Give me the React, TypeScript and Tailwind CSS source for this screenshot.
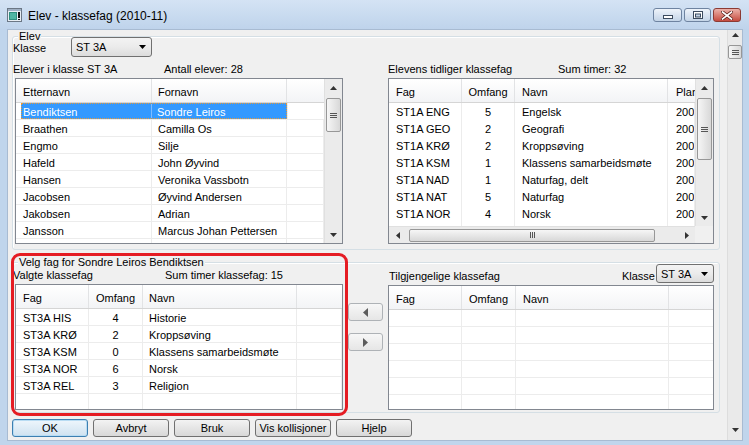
import React from 'react';

type Dir = 'up' | 'down' | 'left' | 'right';

function Tri({ dir, className = '', big = false }: { dir: Dir; className?: string; big?: boolean }) {
  const vert = dir === 'up' || dir === 'down';
  const w = big ? (vert ? 9 : 5) : vert ? 7 : 4;
  const h = big ? (vert ? 5 : 9) : vert ? 4 : 7;
  const pts =
    dir === 'up'
      ? `0,${h} ${w / 2},0 ${w},${h}`
      : dir === 'down'
      ? `0,0 ${w},0 ${w / 2},${h}`
      : dir === 'left'
      ? `${w},0 ${w},${h} 0,${h / 2}`
      : `0,0 0,${h} ${w},${h / 2}`;
  return (
    <svg width={w} height={h} viewBox={`0 0 ${w} ${h}`} className={className}>
      <polygon points={pts} fill="currentColor" />
    </svg>
  );
}

function AppIcon() {
  return (
    <svg width="15" height="14" viewBox="0 0 15 14">
      <rect x="0.5" y="0.5" width="14" height="13" fill="#e8eef4" stroke="#6b7785" />
      <rect x="1" y="1" width="13" height="2" fill="#9fb0c4" />
      <rect x="2" y="4" width="8" height="8" fill="#2f8f7f" />
      <rect x="3" y="5" width="6" height="6" fill="#4fb6a3" />
      <rect x="11" y="4" width="2" height="6" fill="#111" />
      <rect x="11" y="11" width="2" height="1" fill="#111" />
    </svg>
  );
}

function CaptionButtons() {
  return (
    <div className="ml-auto mt-[8px] mr-[8px] flex gap-[2px]">
      <div className="w-[29px] h-[14px] rounded-[3px] border border-[#6e83a0] bg-gradient-to-b from-[#eef3fa] to-[#c4d4e7] flex items-end justify-center pb-[2px]">
        <svg width="10" height="4" viewBox="0 0 10 4">
          <rect x="0.5" y="0.5" width="9" height="3" fill="#fff" stroke="#3b4a5e" />
        </svg>
      </div>
      <div className="w-[27px] h-[14px] rounded-[3px] border border-[#6e83a0] bg-gradient-to-b from-[#eef3fa] to-[#c4d4e7] flex items-center justify-center">
        <svg width="10" height="8" viewBox="0 0 10 8">
          <rect x="0.5" y="0.5" width="9" height="7" fill="#fff" stroke="#3b4a5e" />
          <rect x="2.5" y="3" width="5" height="3" fill="#c4d4e7" stroke="#3b4a5e" />
        </svg>
      </div>
      <div className="w-[28px] h-[14px] rounded-[3px] border border-[#8c3a33] bg-gradient-to-b from-[#eab1aa] to-[#c54a40] flex items-center justify-center">
        <svg width="12" height="9" viewBox="0 0 12 9">
          <path d="M1.5 1 L10.5 8 M10.5 1 L1.5 8" stroke="#5a1f1a" strokeWidth="3.2" strokeLinecap="square" />
          <path d="M1.5 1 L10.5 8 M10.5 1 L1.5 8" stroke="#ffffff" strokeWidth="1.6" strokeLinecap="square" />
        </svg>
      </div>
    </div>
  );
}

type Col = { w: string; cls?: string };

function Header({ cols, labels }: { cols: Col[]; labels: string[] }) {
  return (
    <div className="flex h-[24px] shrink-0 border-b border-[#d5d5d5] bg-gradient-to-b from-white to-[#f3f4f6]">
      {cols.map((c, i) => (
        <div
          key={i}
          className={`${c.w} ${c.cls ?? ''} shrink-0 flex items-center pt-[3px] overflow-hidden whitespace-nowrap ${
            i < cols.length - 1 ? 'border-r border-[#e2e3e5]' : ''
          }`}
        >
          {labels[i]}
        </div>
      ))}
    </div>
  );
}

function Row({ cols, cells, hLine, vLine }: { cols: Col[]; cells: string[]; hLine: boolean; vLine: boolean }) {
  return (
    <div className={`flex h-[17px] shrink-0 ${hLine ? 'border-b border-[#ececec]' : ''}`}>
      {cols.map((c, i) => (
        <div
          key={i}
          className={`${c.w} ${c.cls ?? ''} shrink-0 flex items-center pt-[2px] overflow-hidden whitespace-nowrap ${
            vLine ? 'border-r border-[#ececec]' : ''
          }`}
        >
          {cells[i] ?? ''}
        </div>
      ))}
    </div>
  );
}

function Thumb({ className, horizontal = false }: { className: string; horizontal?: boolean }) {
  return (
    <div
      className={`${className} rounded-[2px] border border-[#979797] ${
        horizontal ? 'bg-gradient-to-b' : 'bg-gradient-to-r'
      } from-[#f6f6f6] to-[#d8d8d8] flex items-center justify-center shrink-0`}
    >
      {horizontal ? (
        <div className="flex gap-[1px]">
          <div className="w-[1px] h-[6px] bg-[#555]" />
          <div className="w-[1px] h-[6px] bg-[#555]" />
          <div className="w-[1px] h-[6px] bg-[#555]" />
        </div>
      ) : (
        <div className="flex flex-col gap-[1px]">
          <div className="w-[7px] h-[1px] bg-[#555]" />
          <div className="w-[7px] h-[1px] bg-[#555]" />
          <div className="w-[7px] h-[1px] bg-[#555]" />
        </div>
      )}
    </div>
  );
}

function Combo({ className, text }: { className: string; text: string }) {
  return (
    <div
      className={`${className} shrink-0 flex items-center rounded-[3px] border border-[#707070] bg-gradient-to-b from-[#f3f3f3] via-[#ebebeb] to-[#dcdcdc] pl-[4px] pr-[5px]`}
    >
      <span className="flex-1 whitespace-nowrap pt-[1px]">{text}</span>
      <Tri dir="down" className="text-black" />
    </div>
  );
}

function WinButton({ label, primary = false }: { label: string; primary?: boolean }) {
  return (
    <div
      className={`w-[76px] h-[18px] rounded-[3px] border flex items-center justify-center pt-[1px] whitespace-nowrap ${
        primary
          ? 'border-[#3c7fb1] bg-gradient-to-b from-[#eef6fc] to-[#cfe2f0] shadow-[inset_0_0_0_1px_#b8dcf3]'
          : 'border-[#707070] bg-gradient-to-b from-[#f3f3f3] to-[#d8d8d8]'
      }`}
    >
      {label}
    </div>
  );
}

const colsTL: Col[] = [
  { w: 'w-[136px]', cls: 'pl-[7px]' },
  { w: 'w-[135px]', cls: 'pl-[6px]' },
  { w: 'w-[37px]' },
];

const colsTR: Col[] = [
  { w: 'w-[73px]', cls: 'pl-[7px]' },
  { w: 'w-[53px]', cls: 'justify-center' },
  { w: 'w-[153px]', cls: 'pl-[7px]' },
  { w: 'w-[27px]', cls: 'pl-[8px]' },
];

const colsBL: Col[] = [
  { w: 'w-[73px]', cls: 'pl-[7px]' },
  { w: 'w-[54px]', cls: 'justify-center' },
  { w: 'w-[154px]', cls: 'pl-[6px]' },
  { w: 'w-[45px]' },
];

const colsBR: Col[] = [
  { w: 'w-[73px]', cls: 'pl-[7px]' },
  { w: 'w-[54px]', cls: 'justify-center' },
  { w: 'w-[153px]', cls: 'pl-[7px]' },
  { w: 'w-[45px]' },
];

const elever: string[][] = [
  ['Braathen', 'Camilla Os'],
  ['Engmo', 'Silje'],
  ['Hafeld', 'John Øyvind'],
  ['Hansen', 'Veronika Vassbotn'],
  ['Jacobsen', 'Øyvind Andersen'],
  ['Jakobsen', 'Adrian'],
  ['Jansson', 'Marcus Johan Pettersen'],
  ['', ''],
];

const tidligere: string[][] = [
  ['ST1A ENG', '5', 'Engelsk', '2008'],
  ['ST1A GEO', '2', 'Geografi', '2008'],
  ['ST1A KRØ', '2', 'Kroppsøving', '2008'],
  ['ST1A KSM', '1', 'Klassens samarbeidsmøte', '2008'],
  ['ST1A NAD', '1', 'Naturfag, delt', '2008'],
  ['ST1A NAT', '5', 'Naturfag', '2008'],
  ['ST1A NOR', '4', 'Norsk', '2008'],
  ['', '', '', ''],
];

const valgte: string[][] = [
  ['ST3A HIS', '4', 'Historie'],
  ['ST3A KRØ', '2', 'Kroppsøving'],
  ['ST3A KSM', '0', 'Klassens samarbeidsmøte'],
  ['ST3A NOR', '6', 'Norsk'],
  ['ST3A REL', '3', 'Religion'],
  ['', '', ''],
];

function TopLeftTable() {
  return (
    <div className="ml-[2px] mt-[1px] w-[328px] h-[166px] border border-[#828790] bg-white flex overflow-hidden">
      <div className="w-[308px] flex flex-col overflow-hidden">
        <Header cols={colsTL} labels={['Etternavn', 'Fornavn', '']} />
        <div className="flex h-[17px] shrink-0 border-b border-[#ececec]">
          <div className="w-[5px] shrink-0" />
          <div className="w-[266px] h-full flex bg-[#3399ff] text-white border border-dotted border-[#e49a3c]">
            <div className="w-[130px] shrink-0 flex items-center pt-[2px] pl-[1px] border-r border-[#7fbcff]">Bendiktsen</div>
            <div className="flex-1 flex items-center pt-[2px] pl-[5px]">Sondre Leiros</div>
          </div>
          <div className="w-[37px] shrink-0 border-l border-[#ececec]" />
        </div>
        {elever.map((r, i) => (
          <Row key={i} cols={colsTL} cells={r} hLine vLine />
        ))}
      </div>
      <div className="w-[18px] flex flex-col bg-[#ebebeb] border-l border-[#e0e0e0]">
        <div className="h-[17px] shrink-0 flex items-center justify-center">
          <Tri dir="up" className="text-[#333]" />
        </div>
        <Thumb className="mt-[2px] h-[34px] mx-[1px]" />
        <div className="flex-1" />
        <div className="h-[17px] shrink-0 flex items-center justify-center">
          <Tri dir="down" className="text-[#333]" />
        </div>
      </div>
    </div>
  );
}

function TopRightTable() {
  return (
    <div className="mt-[1px] w-[326px] h-[166px] border border-[#828790] bg-white flex overflow-hidden">
      <div className="w-[306px] flex flex-col overflow-hidden">
        <Header cols={colsTR} labels={['Fag', 'Omfang', 'Navn', 'Plan']} />
        <div className="flex-1 overflow-hidden flex flex-col">
          {tidligere.map((r, i) => (
            <Row key={i} cols={colsTR} cells={r} hLine={false} vLine />
          ))}
        </div>
        <div className="h-[17px] shrink-0 flex items-center bg-[#ebebeb] border-t border-[#e0e0e0]">
          <div className="w-[17px] h-full flex items-center justify-center">
            <Tri dir="left" className="text-[#333]" />
          </div>
          <Thumb horizontal className="ml-[3px] w-[246px] h-[13px]" />
          <div className="flex-1" />
          <div className="w-[17px] h-full flex items-center justify-center">
            <Tri dir="right" className="text-[#333]" />
          </div>
        </div>
      </div>
      <div className="w-[18px] flex flex-col">
        <div className="flex-1 flex flex-col bg-[#ebebeb] border-l border-[#e0e0e0]">
          <div className="h-[17px] shrink-0 flex items-center justify-center">
            <Tri dir="up" className="text-[#333]" />
          </div>
          <Thumb className="mt-[2px] h-[62px] mx-[1px]" />
          <div className="flex-1" />
          <div className="h-[17px] shrink-0 flex items-center justify-center">
            <Tri dir="down" className="text-[#333]" />
          </div>
        </div>
        <div className="h-[17px] shrink-0 bg-[#f0f0f0]" />
      </div>
    </div>
  );
}

function SimpleTable({ cols, rows, className }: { cols: Col[]; rows: string[][]; className: string }) {
  return (
    <div className={`${className} border border-[#828790] bg-white flex flex-col overflow-hidden`}>
      <Header cols={cols} labels={['Fag', 'Omfang', 'Navn', '']} />
      {rows.map((r, i) => (
        <Row key={i} cols={cols} cells={r} hLine vLine />
      ))}
    </div>
  );
}

function ArrowButton({ dir }: { dir: Dir }) {
  return (
    <div className="w-[35px] h-[18px] rounded-[3px] border border-[#aeb2b6] bg-gradient-to-b from-[#f7f7f7] to-[#e6e6e6] flex items-center justify-center">
      <Tri dir={dir} big className="text-[#5c5c5c]" />
    </div>
  );
}

function GroupBox({ className, legend, legendPos, children }: { className: string; legend: string; legendPos: string; children: React.ReactNode }) {
  return (
    <div className={`${className} relative rounded-[3px] border border-[#d5dfe5] shadow-[inset_1px_1px_0_#ffffff]`}>
      <div className={`absolute ${legendPos} bg-[#f0f0f0] px-[1px] leading-[11px] whitespace-nowrap`}>{legend}</div>
      {children}
    </div>
  );
}

function Content() {
  return (
    <div className="w-[719px] flex flex-col">
      <GroupBox className="ml-[4px] mt-[6px] w-[708px] h-[214px] flex flex-col" legend="Elev" legendPos="left-[5px] top-[-6px]">
        <div className="flex items-center h-[20px] mt-[0px]">
          <div className="w-[58px] pt-[2px] leading-[11px]">Klasse</div>
          <Combo className="w-[81px] h-[20px]" text="ST 3A" />
        </div>
        <div className="flex">
          <div className="w-[330px] flex flex-col">
            <div className="mt-[4px] h-[16px] flex items-center whitespace-nowrap">
              <span className="w-[151px]">Elever i klasse ST 3A</span>
              <span>Antall elever: 28</span>
            </div>
            <TopLeftTable />
          </div>
          <div className="ml-[45px] w-[326px] flex flex-col">
            <div className="mt-[4px] h-[16px] flex items-center whitespace-nowrap">
              <span className="w-[170px]">Elevens tidliger klassefag</span>
              <span>Sum timer: 32</span>
            </div>
            <TopRightTable />
          </div>
        </div>
      </GroupBox>

      <GroupBox
        className="ml-[4px] mt-[12px] w-[708px] h-[151px] flex"
        legend="Velg fag for Sondre Leiros Bendiktsen"
        legendPos="left-[5px] top-[-6px]"
      >
        <div className="w-[330px] flex flex-col">
          <div className="mt-[4px] h-[16px] flex items-center whitespace-nowrap">
            <span className="w-[152px]">Valgte klassefag</span>
            <span>Sum timer klassefag: 15</span>
          </div>
          <SimpleTable cols={colsBL} rows={valgte} className="ml-[2px] mt-[1px] w-[328px] h-[126px]" />
        </div>
        <div className="ml-[5px] w-[35px] flex flex-col">
          <div className="mt-[40px]">
            <ArrowButton dir="left" />
          </div>
          <div className="mt-[12px]">
            <ArrowButton dir="right" />
          </div>
        </div>
        <div className="ml-[5px] w-[327px] flex flex-col">
          <div className="h-[20px] flex items-end justify-between whitespace-nowrap">
            <span className="pl-[1px]">Tilgjengelige klassefag</span>
            <div className="flex items-end">
              <span className="mr-[1px]">Klasse</span>
              <Combo className="w-[58px] h-[19px] mr-[1px]" text="ST 3A" />
            </div>
          </div>
          <SimpleTable
            cols={colsBR}
            rows={[[''], [''], [''], [''], [''], ['']]}
            className="mt-[2px] w-[326px] h-[125px]"
          />
        </div>
      </GroupBox>

      <div className="ml-[4px] mt-[6px] flex gap-[5px]">
        <WinButton label="OK" primary />
        <WinButton label="Avbryt" />
        <WinButton label="Bruk" />
        <WinButton label="Vis kollisjoner" />
        <WinButton label="Hjelp" />
      </div>
    </div>
  );
}

function WindowScroll() {
  return (
    <div className="w-[15px] h-full flex flex-col bg-[#eaeaea] border-l border-[#dddddd]">
      <div className="h-[15px] shrink-0 flex justify-center pt-[3px]">
        <Tri dir="up" className="text-[#333]" />
      </div>
      <Thumb className="w-full h-[14px]" />
      <div className="flex-1" />
      <div className="h-[15px] shrink-0 flex justify-center pt-[3px]">
        <Tri dir="down" className="text-[#333]" />
      </div>
    </div>
  );
}

export default function App() {
  return (
    <div className="w-[749px] h-[445px] relative flex flex-col overflow-hidden bg-[#c0d5ec] text-[11px] leading-[13px] text-black font-['Liberation_Sans',Arial,sans-serif]">
      <div className="h-[30px] shrink-0 flex items-start bg-gradient-to-b from-[#d4e3f4] to-[#bed3eb]">
        <div className="mt-[8px] ml-[7px]">
          <AppIcon />
        </div>
        <div className="ml-[6px] mt-[9px] text-[12px] leading-[14px] whitespace-nowrap">Elev - klassefag (2010-11)</div>
        <CaptionButtons />
      </div>
      <div className="flex">
        <div className="w-[8px] shrink-0" />
        <div className="w-[734px] h-[410px] bg-[#f0f0f0] flex shadow-[0_0_0_1px_#a8bbd2]">
          <Content />
          <WindowScroll />
        </div>
      </div>
      <div className="absolute left-[11px] top-[253px] w-[337px] h-[163px] border-[3px] border-[#e51c23] rounded-[9px]" />
    </div>
  );
}
